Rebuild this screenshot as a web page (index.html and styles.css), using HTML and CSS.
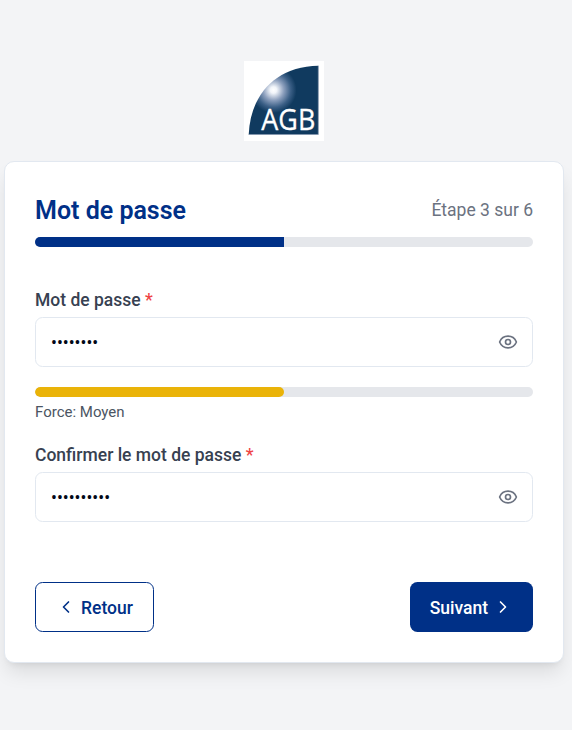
FILE: index.html
```html
<!DOCTYPE html>
<html lang="fr">
<head>
<meta charset="utf-8">
<title>AGB – Mot de passe</title>
<link rel="stylesheet" href="styles.css">
</head>
<body>
<main class="page">
  <svg class="logo" viewBox="0 0 80 80" role="img" aria-label="AGB">
    <defs>
      <radialGradient id="glow" gradientUnits="userSpaceOnUse" cx="29.5" cy="29" r="23">
        <stop offset="0" stop-color="#fff"/>
        <stop offset="0.14" stop-color="#f2f5fa"/>
        <stop offset="0.45" stop-color="#8c9fbd"/>
        <stop offset="0.75" stop-color="#3b5f86"/>
        <stop offset="1" stop-color="#103a5f"/>
      </radialGradient>
    </defs>
    <rect width="80" height="80" fill="#fff"/>
    <path d="M4.7 73.5C6.5 34 31 5.5 74.3 4.7V73.5Z" fill="url(#glow)"/>
    <path d="M4.7 73.5H74.3V4.7" fill="none" stroke="#8295ad" stroke-width="0.7"/>
    <text class="logo-text" x="17.3" y="69.3" textLength="54" lengthAdjust="spacingAndGlyphs">AGB</text>
  </svg>

  <form class="card">
    <header class="card-header">
      <h1 class="title">Mot de passe</h1>
      <span class="step">Étape 3 sur 6</span>
    </header>
    <div class="bar"><div class="bar-fill"></div></div>

    <div class="field first">
      <label class="label" for="pw">Mot de passe <span class="required">*</span></label>
      <div class="control">
        <input class="input" id="pw" type="password" value="password">
        <svg class="icon" viewBox="0 0 24 24"><path d="M2.062 12.348a1 1 0 0 1 0-.696 10.75 10.75 0 0 1 19.876 0 1 1 0 0 1 0 .696 10.75 10.75 0 0 1-19.876 0"/><circle cx="12" cy="12" r="3"/></svg>
      </div>
    </div>
    <div class="bar strength"><div class="bar-fill medium"></div></div>
    <p class="strength-text">Force: Moyen</p>

    <div class="field second">
      <label class="label" for="confirm">Confirmer le mot de passe <span class="required">*</span></label>
      <div class="control">
        <input class="input" id="confirm" type="password" value="motdepasse">
        <svg class="icon" viewBox="0 0 24 24"><path d="M2.062 12.348a1 1 0 0 1 0-.696 10.75 10.75 0 0 1 19.876 0 1 1 0 0 1 0 .696 10.75 10.75 0 0 1-19.876 0"/><circle cx="12" cy="12" r="3"/></svg>
      </div>
    </div>

    <footer class="actions">
      <button class="button outline" type="button"><svg class="icon" viewBox="0 0 24 24"><path d="m15 18-6-6 6-6"/></svg><span class="caption">Retour</span></button>
      <button class="button primary" type="button"><span class="caption">Suivant</span><svg class="icon" viewBox="0 0 24 24"><path d="m9 18 6-6-6-6"/></svg></button>
    </footer>
  </form>
</main>
</body>
</html>
```
FILE: styles.css
```css
* { box-sizing: border-box; }

body {
  margin: 0;
  background: #f3f4f6;
  font-family: Roboto, sans-serif;
  font-size: 17.5px;
  line-height: 25px;
  overflow: hidden;
}

.page {
  display: flex;
  flex-direction: column;
  height: 730px;
  padding: 61px 8px 0 4px;
}

.logo {
  width: 80px;
  height: 80px;
  margin: 0 0 20px 240px;
}

.logo-text {
  fill: #fff;
  stroke: #fff;
  stroke-width: 0.3;
  font-family: "Open Sans", sans-serif;
  font-size: 28.5px;
}

.card {
  height: 502px;
  padding: 30px;
  background: #fff;
  border: 1px solid #e2e8f0;
  border-radius: 10px;
  box-shadow: 0 12.5px 18.75px -3.75px rgba(0, 0, 0, 0.1), 0 5px 7.5px -5px rgba(0, 0, 0, 0.1);
}

.card-header {
  display: flex;
  align-items: center;
  justify-content: space-between;
  height: 35px;
  padding-top: 2px;
  margin-bottom: 10px;
}

.title {
  margin: 0;
  color: #003087;
  font-size: 25px;
  font-weight: 600;
  line-height: 35px;
}

.step { color: #6b7280; }

.bar {
  height: 10px;
  overflow: hidden;
  background: #e5e7eb;
  border-radius: 5px;
}

.bar-fill {
  width: 50%;
  height: 100%;
  background: #003087;
}

.bar-fill.medium {
  background: #eab308;
  border-radius: 5px;
}

.field.first { margin-top: 40px; }
.field.second { margin-top: 20px; }

.label {
  display: block;
  padding-top: 1px;
  margin-bottom: 4px;
  color: #374151;
  font-weight: 500;
}

.required { color: #ef4444; }

.control {
  display: flex;
  align-items: center;
  height: 50px;
  padding: 0 14px 0 15px;
  border: 1px solid #e2e8f0;
  border-radius: 7.5px;
}

.input {
  flex: 1;
  min-width: 0;
  padding: 2px 0 0;
  border: 0;
  outline: 0;
  background: transparent;
  color: #020817;
  font: inherit;
}

.icon {
  flex: none;
  width: 20px;
  height: 20px;
  fill: none;
  stroke: currentColor;
  stroke-width: 2;
  stroke-linecap: round;
  stroke-linejoin: round;
}

.control .icon { color: #6b7280; }

.strength { margin-top: 20px; }

.strength-text {
  margin: 5px 0 0;
  color: #4b5563;
  font-size: 15px;
  line-height: 20px;
}

.actions {
  display: flex;
  justify-content: space-between;
  margin-top: 60px;
}

.button {
  display: flex;
  align-items: center;
  gap: 5px;
  height: 50px;
  padding: 0 20px;
  border: 0;
  border-radius: 7.5px;
  font: inherit;
  font-weight: 500;
}

.caption { padding-top: 2px; }

.button.outline {
  background: #fff;
  border: 1px solid #003087;
  color: #003087;
}

.button.primary {
  background: #003087;
  color: #fff;
}
```
